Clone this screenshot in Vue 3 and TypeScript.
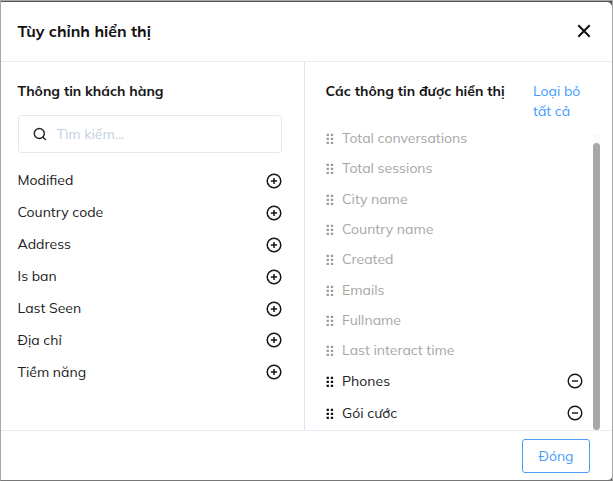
<script setup lang="ts">
interface Field {
  name: string
  fixed?: boolean
}

const available: string[] = [
  'Modified',
  'Country code',
  'Address',
  'Is ban',
  'Last Seen',
  'Địa chỉ',
  'Tiềm năng',
]

const shown: Field[] = [
  { name: 'Total conversations', fixed: true },
  { name: 'Total sessions', fixed: true },
  { name: 'City name', fixed: true },
  { name: 'Country name', fixed: true },
  { name: 'Created', fixed: true },
  { name: 'Emails', fixed: true },
  { name: 'Fullname', fixed: true },
  { name: 'Last interact time', fixed: true },
  { name: 'Phones' },
  { name: 'Gói cước' },
]
</script>

<template>
  <div class="backdrop">
    <div class="modal">
      <header class="header">
        <h1 class="title">Tùy chỉnh hiển thị</h1>
        <button class="icon-button" aria-label="Đóng">
          <svg width="14" height="14" viewBox="0 0 14 14" fill="none" stroke="#111" stroke-width="2">
            <path d="M1.3 1.3 12.7 12.7M12.7 1.3 1.3 12.7" />
          </svg>
        </button>
      </header>
      <main class="body">
        <section class="left">
          <h2 class="subtitle">Thông tin khách hàng</h2>
          <label class="search">
            <svg width="14" height="14" viewBox="0 0 14 14" fill="none" stroke="#222" stroke-width="1.4" stroke-linecap="round">
              <circle cx="6.3" cy="6.5" r="5" />
              <path d="m10 10.2 2.3 2.3" />
            </svg>
            <input class="search-input" type="text" placeholder="Tìm kiếm..." />
          </label>
          <ul class="list">
            <li v-for="name in available" :key="name" class="row">
              <span class="label">{{ name }}</span>
              <svg width="16" height="16" viewBox="0 0 16 16" fill="none" stroke="#151515" stroke-width="1.5">
                <circle cx="8" cy="8" r="6.8" />
                <path d="M8 4.9v6.2M4.9 8h6.2" />
              </svg>
            </li>
          </ul>
        </section>
        <section class="right">
          <div class="right-head">
            <h2 class="subtitle">Các thông tin được hiển thị</h2>
            <a class="clear">Loại bỏ tất cả</a>
          </div>
          <div class="scroll">
            <ul class="shown">
              <li v-for="field in shown" :key="field.name" class="item" :class="{ fixed: field.fixed }">
                <svg class="grip" width="8" height="12" viewBox="0 0 8 12" fill="currentColor">
                  <path d="M.6.7h2.3V3H.6zM4.8.7h2.3V3H4.8zM.6 4.7h2.3V7H.6zM4.8 4.7h2.3V7H4.8zM.6 8.8h2.3v2.3H.6zM4.8 8.8h2.3v2.3H4.8z" />
                </svg>
                <span class="label">{{ field.name }}</span>
                <svg v-if="!field.fixed" class="remove" width="16" height="16" viewBox="0 0 16 16" fill="none" stroke="#151515" stroke-width="1.4">
                  <circle cx="8" cy="8" r="6.8" />
                  <path d="M4.9 8h6.2" />
                </svg>
              </li>
            </ul>
            <div class="track"><div class="thumb"></div></div>
          </div>
        </section>
      </main>
      <footer class="footer">
        <button class="close">Đóng</button>
      </footer>
    </div>
  </div>
</template>

<style>
body {
  margin: 0;
  overflow: hidden;
}
</style>

<style scoped>
* {
  box-sizing: border-box;
}
.backdrop {
  width: 613px;
  height: 481px;
  border: 1px solid #a8a8a8;
  border-bottom-color: #777;
  background: #555;
  padding-top: 1px;
  font-family: Mulish, Lato, 'Noto Sans', sans-serif;
  font-size: 14px;
  color: #222;
}
.modal {
  height: 478px;
  background: #fff;
  border-radius: 0 5px 4px 0;
  display: flex;
  flex-direction: column;
}
.header {
  height: 60px;
  flex: none;
  display: flex;
  align-items: center;
  justify-content: space-between;
  padding: 0 21px 1px 16.5px;
  border-bottom: 1px solid #e4edf5;
}
.title {
  margin: 0;
  font-size: 16px;
  line-height: 20px;
  font-weight: 700;
  color: #111;
}
.icon-button {
  display: flex;
  padding: 0;
  border: 0;
  background: none;
}
.body {
  height: 368px;
  flex: none;
  display: grid;
  grid-template-columns: 304px 1fr;
}
.left {
  border-right: 1px solid #dce7f0;
  padding: 19px 22px 0 16.5px;
}
.subtitle {
  margin: 0;
  font-size: 14px;
  line-height: 20px;
  font-weight: 700;
  color: #161616;
  white-space: nowrap;
}
.search {
  height: 38px;
  margin-top: 14px;
  padding: 0 14.5px;
  display: flex;
  align-items: center;
  gap: 9.5px;
  border: 1px solid #e0e8f0;
  border-radius: 3px;
}
.search-input {
  min-width: 0;
  flex: 1;
  padding: 0;
  border: 0;
  outline: 0;
  font: inherit;
}
.search-input::placeholder {
  color: #c3d0e0;
}
.list,
.shown {
  list-style: none;
  margin: 0;
  padding: 0;
}
.list {
  margin-top: 12px;
}
.row {
  height: 31.9px;
  display: flex;
  align-items: center;
  justify-content: space-between;
}
.label {
  line-height: 20px;
}
.row .label {
  padding-bottom: 1px;
}
.right {
  padding: 19px 12px 0 20.5px;
}
.right-head {
  display: flex;
  justify-content: space-between;
}
.clear {
  width: 60px;
  margin-right: 7px;
  line-height: 20px;
  color: #3f9bff;
}
.scroll {
  height: 309px;
  display: flex;
  justify-content: space-between;
}
.shown {
  width: 257px;
  padding-top: 2px;
}
.item {
  height: 31.9px;
  display: flex;
  align-items: center;
  color: #222;
}
.item.fixed {
  height: 30.3px;
  color: #a6a6a6;
}
.grip {
  margin: 2px 8px 0 0.5px;
  color: #111;
}
.fixed .grip {
  color: #999;
}
.remove {
  margin-left: auto;
}
.track {
  width: 7px;
  height: 297px;
  margin-top: 12px;
  padding-top: 10px;
  background: #fafafa;
  border-radius: 4px;
}
.thumb {
  height: 287px;
  border-radius: 4px;
  background: #a8a8a8;
}
.footer {
  flex: 1;
  border-top: 1px solid #e4edf5;
  display: flex;
  justify-content: flex-end;
  align-items: flex-start;
  padding: 8px 22px 0 0;
}
.close {
  width: 68px;
  height: 34px;
  padding: 0;
  border: 1px solid #4a9bf5;
  border-radius: 3px;
  background: #fff;
  font: inherit;
  color: #4a9bf5;
}
</style>
